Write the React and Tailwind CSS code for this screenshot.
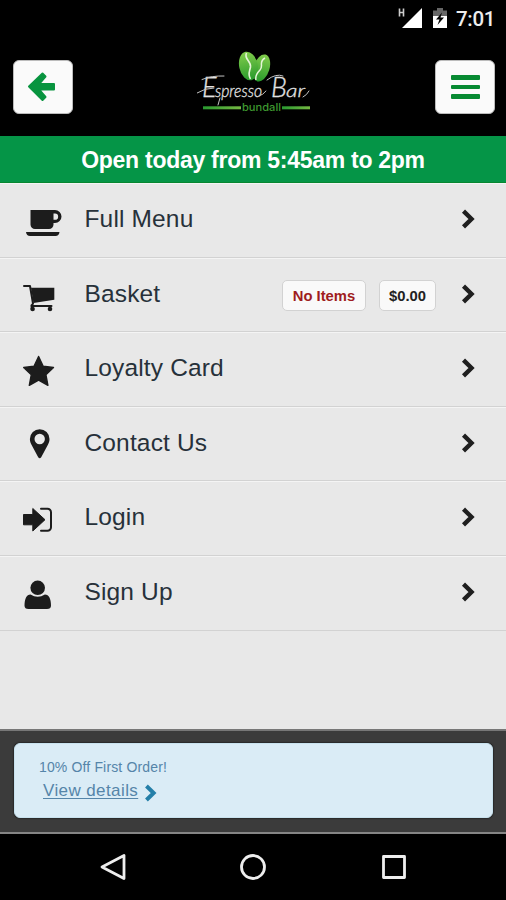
const CupIcon = () => (
  <svg viewBox="0 1 85 72" className="w-[85px] h-[72px] shrink-0" fill="#1c1c1c">
    <path d="M30.5 27H55a6 6 0 0 1 0 13h-1.500v1.500a4.500 4.500 0 0 1-4.500 4.500H35a4.500 4.500 0 0 1-4.500-4.500zM53.500 30.500v6.300H55a3.100 3.100 0 0 0 0-6.300z" fillRule="evenodd" />
    <path d="M26 49h33.500q-.5 4-4 4H30q-3.500 0-4-4z" />
  </svg>
)

const CartIcon = () => (
  <svg viewBox="0 1 85 72" className="w-[85px] h-[72px] shrink-0" fill="#1c1c1c">
    <path d="M24 28h6l3 17.500-1.500 2.500H51.500" fill="none" stroke="#1c1c1c" strokeWidth="2" strokeLinecap="round" strokeLinejoin="round" />
    <path d="M31 29.800h23.300V41.800L33.500 45z" />
    <path d="M31.500 46.500v5M50 47v4" stroke="#1c1c1c" strokeWidth="1.500" />
    <circle cx="32.600" cy="51" r="2.300" />
    <circle cx="50" cy="51" r="2.300" />
  </svg>
)

const StarIcon = () => (
  <svg viewBox="0 0 85 72" className="w-[85px] h-[72px] shrink-0" fill="#1c1c1c">
    <path d="M38.600 23.500l4.600 9.700 10.300 1.300-7.600 7.200 2 10.600-9.300-5.100-9.300 5.100 2-10.600-7.600-7.200 10.300-1.300z" stroke="#1c1c1c" strokeWidth="1.400" strokeLinejoin="round" />
  </svg>
)

const PinIcon = () => (
  <svg viewBox="0 1 85 72" className="w-[85px] h-[72px] shrink-0" fill="#1c1c1c">
    <path d="M39.700 22.200a9.800 9.800 0 0 1 9.800 9.800c0 2.500-.8 4-1.600 5.700L41.200 50.300q-1.500 2-3 0L31.500 37.700C30.700 36 29.900 34.500 29.900 32a9.800 9.800 0 0 1 9.800-9.800zm0 4.600a5.200 5.200 0 1 0 0 10.400 5.200 5.200 0 0 0 0-10.400z" fillRule="evenodd" />
  </svg>
)

const LoginIcon = () => (
  <svg viewBox="0 1 85 72" className="w-[85px] h-[72px] shrink-0" fill="#1c1c1c">
    <path d="M23.500 33.500h9.300V27.500L45 38.700 32.800 50v-6.200h-9.300z" strokeWidth="1" stroke="#1c1c1c" strokeLinejoin="round" />
    <path d="M41 27.800h6.500a3.500 3.500 0 0 1 3.500 3.500v15a3.500 3.500 0 0 1-3.500 3.500H41" fill="none" stroke="#1c1c1c" strokeWidth="2" strokeLinecap="round" />
  </svg>
)

const UserIcon = () => (
  <svg viewBox="0 1 85 72" className="w-[85px] h-[72px] shrink-0" fill="#1c1c1c">
    <circle cx="37.700" cy="31.800" r="7.300" />
    <path d="M30.500 38.500q7.200 4.500 14.400 0C49 38.500 51 43 51 49.500q0 3.500-4 3.500H28.500q-4 0-4-3.500c0-6.500 2-11 6-11z" />
  </svg>
)

const Chevron = ({ className }) => (
  <svg viewBox="0 0 14 20" className={className} fill="none" stroke="currentColor" strokeWidth="4.400">
    <path d="M2.500 2.200l8 7.800-8 7.800" />
  </svg>
)

const StatusBar = () => (
  <div className="h-9 flex justify-end items-start pt-[7px] pr-[11px]">
    <svg viewBox="0 0 26 22" className="w-[26px] h-[22px]">
      <path d="M1.500 1.500v8M5.500 1.500v8M1.500 5.500h4" stroke="#ccc" strokeWidth="1.600" />
      <path d="M24 1v20H4z" fill="#fff" />
    </svg>
    <svg viewBox="0 0 16 22" className="w-4 h-[22px] ml-[8px]">
      <path d="M1 3.500h4V1h6v2.500h4V10H1z" fill="#666" />
      <path d="M1 9h14v12H1z" fill="#fff" />
      <path d="M10 5.500L4 12.500h3.500L5.500 18l6.500-7.500H8.500z" fill="#000" />
    </svg>
    <span className="ml-[8px] w-[39px] text-[20.5px] leading-6 font-medium text-[#ededed] tracking-[-0.3px] font-[Roboto,sans-serif]">7:01</span>
  </div>
)

const Logo = () => (
  <svg viewBox="0 0 120 64" className="w-[120px] h-16 ml-[5px]">
    <defs>
      <linearGradient id="bean" x1="0" y1="0" x2="0" y2="1">
        <stop offset="0" stopColor="#82cc4c" />
        <stop offset="1" stopColor="#279a2b" />
      </linearGradient>
      <linearGradient id="rule" x1="0" x2="1">
        <stop offset="0" stopColor="#2a9a30" />
        <stop offset="1" stopColor="#75b843" />
      </linearGradient>
    </defs>
    <ellipse cx="64.500" cy="18" rx="8" ry="14" transform="rotate(17 64.500 18)" fill="url(#bean)" />
    <ellipse cx="51.500" cy="16" rx="9.300" ry="14.500" transform="rotate(-12 51.500 16)" fill="url(#bean)" />
    <path d="M49.500 3c-3 6 5 8 4 14-1 5-3 7 0 12" fill="none" stroke="#e6f5d8" strokeWidth="1.600" />
    <path d="M68 8c-7 4-1 8-5 12-3 3-5 6-4 10" fill="none" stroke="#e6f5d8" strokeWidth="1.500" />
    <g className="font-[Lato,sans-serif] italic font-light" fill="#e2e2e2" stroke="#e2e2e2" strokeWidth="0.300">
      <text x="5" y="47" fontSize="27" textLength="14">E</text>
      <text x="18" y="47" fontSize="18" textLength="47" lengthAdjust="spacingAndGlyphs">spresso</text>
      <text x="74" y="47" fontSize="27" textLength="17">B</text>
      <text x="89" y="47" fontSize="18" textLength="19" lengthAdjust="spacingAndGlyphs">ar</text>
    </g>
    <path d="M5 29.500q10-4 22-3.500M0 43q8-5 17-5M62 46q4-1 7-5M70 30q9-7 16-4M106 47q4-2 6-6M23 48l-2 7" fill="none" stroke="#c4c4c4" strokeWidth="1" strokeLinecap="round" />
    <rect x="6" y="56.300" width="38" height="3" fill="url(#rule)" />
    <rect x="85" y="56.300" width="28" height="3" fill="url(#rule)" />
    <text x="45" y="61" fontSize="10.500" textLength="39" lengthAdjust="spacingAndGlyphs" fill="#3e982f" className="font-[Inter,sans-serif] font-medium">bundall</text>
  </svg>
)

const menuItems = [
  { label: 'Full Menu', Icon: CupIcon },
  { label: 'Basket', Icon: CartIcon, badges: true },
  { label: 'Loyalty Card', Icon: StarIcon },
  { label: 'Contact Us', Icon: PinIcon },
  { label: 'Login', Icon: LoginIcon },
  { label: 'Sign Up', Icon: UserIcon },
]

const MenuRow = ({ label, Icon, badges }) => (
  <li className="h-[74.6px] flex items-start border-b border-b-[#d2d2d2] border-t border-t-[#f4f4f4]">
    <Icon />
    <span className="pt-[21px] text-[24.5px] leading-[28px] tracking-[0.15px] text-[#27313a] -ml-[0.5px]">{label}</span>
    <div className="ml-auto flex pr-[31px]">
      {badges && (
        <div className="flex gap-[13px] mt-[21px] mr-[25px] text-[14.8px] font-bold leading-[30px] text-center">
          <span className="w-[84px] h-[31px] rounded-[5px] border border-[#d2d2d2] bg-[#f9f9f9] text-[#9f1c20]">No Items</span>
          <span className="w-[57px] h-[31px] rounded-[5px] border border-[#d2d2d2] bg-[#f9f9f9] text-[#222]">$0.00</span>
        </div>
      )}
      <Chevron className="w-[14px] h-5 mt-[25px] text-[#1f1f1f]" />
    </div>
  </li>
)

const App = () => {
  return (
    <div className="w-[506px] h-[900px] overflow-hidden flex flex-col bg-black font-['Liberation_Sans',Arial,sans-serif]">
      <StatusBar />

      {/* Header */}
      <header className="h-[100px] flex items-start justify-between pl-[13px] pr-[11px] pt-[14px] shrink-0">
        <button className="w-[60px] h-[54px] mt-[10px] rounded-[6px] bg-[#fafafa] border border-[#bbb] flex items-center justify-center">
          <svg viewBox="0 0 30 30" className="w-[30px] h-[30px] mr-[2px]" fill="#08943f" stroke="#08943f" strokeLinejoin="round">
            <path d="M2 14.500L15.500 1.500l3 3-6.500 7.500H27v5.500H12l6.500 7.500-3 3z" strokeWidth="2" />
          </svg>
        </button>
        <Logo />
        <button className="w-[60px] h-[54px] mt-[10px] rounded-[6px] bg-[#fafafa] border border-[#bbb] flex flex-col items-center justify-center gap-[5px]">
          <span className="w-[29px] h-[4.5px] rounded-[1px] bg-[#078a32]" />
          <span className="w-[29px] h-[4.5px] rounded-[1px] bg-[#078a32]" />
          <span className="w-[29px] h-[4.5px] rounded-[1px] bg-[#078a32]" />
        </button>
      </header>

      <div className="h-[47px] shrink-0 bg-[#059547] border-b border-[#078730] text-white text-center font-bold text-[23px] leading-[49px] tracking-[-0.27px] whitespace-nowrap">
        Open today from 5:45am to 2pm
      </div>

      {/* Menu */}
      <ul className="h-[546px] shrink-0 bg-[#e8e8e8]">
        {menuItems.map((item) => (
          <MenuRow key={item.label} {...item} />
        ))}
      </ul>

      {/* Offer */}
      <div className="h-[105px] shrink-0 bg-[#3b3b3b] border-t-2 border-t-[#777] border-b-2 border-b-[#858585] px-[14px] pt-[12px]">
        <div className="w-[479px] h-[75px] rounded-[6px] bg-[#daecf6] border border-[#c8e2ee] shadow-[0_0_2px_#000] pl-6 pt-[14px] text-[#5585a9]">
          <p className="text-[14px] leading-[18px] tracking-[0.15px]">10% Off First Order!</p>
          <div className="flex items-start pl-[4px] pt-[5px]">
            <a className="text-[17px] leading-[20px] tracking-[0.4px] underline decoration-1 underline-offset-2">View details</a>
            <Chevron className="w-[13px] h-[18px] ml-[6px] mt-[3px] text-[#247fa8]" />
          </div>
        </div>
      </div>

      {/* System navigation */}
      <nav className="h-[66px] flex items-center justify-center gap-[112.500px]">
        <svg viewBox="0 0 28 28" className="w-7 h-7" fill="none" stroke="#eee" strokeWidth="2.800" strokeLinejoin="round">
          <path d="M25 2.500v23L3 14z" />
        </svg>
        <svg viewBox="0 0 28 28" className="w-7 h-7" fill="none" stroke="#eee" strokeWidth="2.800">
          <circle cx="14" cy="14" r="11.500" />
        </svg>
        <svg viewBox="0 0 28 28" className="w-7 h-7" fill="none" stroke="#eee" strokeWidth="2.800" strokeLinejoin="round">
          <rect x="3.500" y="3.500" width="21" height="21" />
        </svg>
      </nav>
    </div>
  )
}

export default App
